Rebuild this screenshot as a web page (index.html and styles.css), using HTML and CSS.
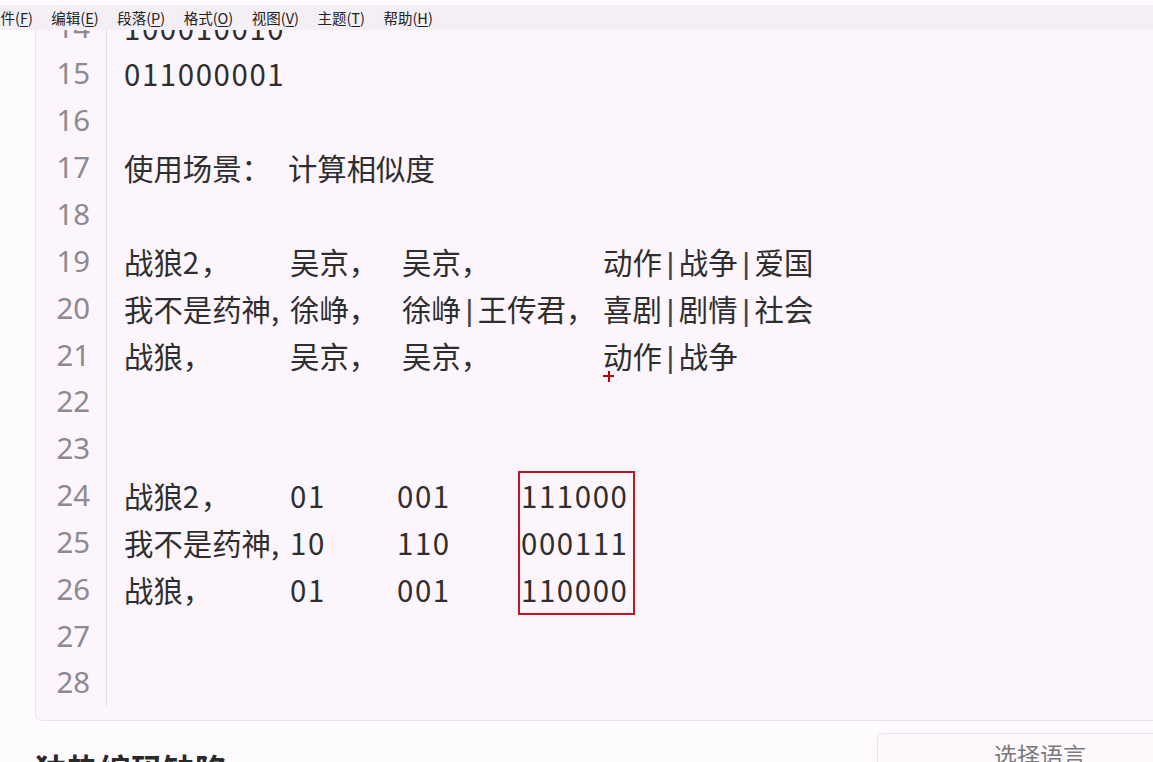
FILE: index.html
```html
<!DOCTYPE html>
<html lang="zh">
<head>
<meta charset="utf-8">
<title>编辑器</title>
<link rel="stylesheet" href="styles.css">
</head>
<body>
<div class="topstrip"></div>
<nav class="menubar">
  <span class="menu">文件(<u>F</u>)</span>
  <span class="menu">编辑(<u>E</u>)</span>
  <span class="menu">段落(<u>P</u>)</span>
  <span class="menu">格式(<u>O</u>)</span>
  <span class="menu">视图(<u>V</u>)</span>
  <span class="menu">主题(<u>T</u>)</span>
  <span class="menu">帮助(<u>H</u>)</span>
</nav>
<main class="editor">
  <div class="lines">
    <div class="row"><span class="num">14</span><span class="txt"><span class="n">100010010</span></span></div>
    <div class="row"><span class="num">15</span><span class="txt"><span class="n">011000001</span></span></div>
    <div class="row"><span class="num">16</span><span class="txt"></span></div>
    <div class="row"><span class="num">17</span><span class="txt">使用场景：<span class="sp"></span>计算相似度</span></div>
    <div class="row"><span class="num">18</span><span class="txt"></span></div>
    <div class="row"><span class="num">19</span><span class="txt"><span class="c1">战狼<span class="n">2</span>，</span><span class="c2">吴京，</span><span class="c3">吴京，</span><span class="c4">动作<span class="bar">|</span>战争<span class="bar">|</span>爱国</span></span></div>
    <div class="row"><span class="num">20</span><span class="txt"><span class="c1">我不是药神,</span><span class="c2">徐峥，</span><span class="c3">徐峥<span class="bar">|</span>王传君，</span><span class="c4">喜剧<span class="bar">|</span>剧情<span class="bar">|</span>社会</span></span></div>
    <div class="row"><span class="num">21</span><span class="txt"><span class="c1">战狼，</span><span class="c2">吴京，</span><span class="c3">吴京，</span><span class="c4 anchor">动作<span class="bar">|</span>战争<span class="cursor"></span></span></span></div>
    <div class="row"><span class="num">22</span><span class="txt"></span></div>
    <div class="row"><span class="num">23</span><span class="txt"></span></div>
    <div class="row"><span class="num">24</span><span class="txt"><span class="c1">战狼<span class="n">2</span>，</span><span class="d2 n">01</span><span class="d3 n">001</span><span class="d4 n anchor">111000<span class="redbox"></span></span></span></div>
    <div class="row"><span class="num">25</span><span class="txt"><span class="c1">我不是药神,</span><span class="d2 n">10</span><span class="d3 n">110</span><span class="d4 n">000111</span></span></div>
    <div class="row"><span class="num">26</span><span class="txt"><span class="c1">战狼，</span><span class="d2 n">01</span><span class="d3 n">001</span><span class="d4 n">110000</span></span></div>
    <div class="row"><span class="num">27</span><span class="txt"></span></div>
    <div class="row"><span class="num">28</span><span class="txt"></span></div>
  </div>
</main>
<footer class="bottom">
  <h2 class="heading">独热编码缺陷</h2>
  <button class="lang">选择语言</button>
</footer>
</body>
</html>
```
FILE: styles.css
```css
html, body {
  margin: 0;
  padding: 0;
}
body {
  background: #fefbfe;
  font-family: "Noto Sans CJK SC", "Noto Sans", sans-serif;
  color: #2e2e2e;
  overflow: hidden;
  width: 1153px;
  height: 762px;
}
.topstrip {
  height: 5px;
}
.menubar {
  height: 25px;
  background: #f4eff4;
  display: flex;
  align-items: center;
  gap: 18.5px;
  margin-left: -14px;
  font-size: 14.5px;
  color: #222;
  white-space: nowrap;
}
.menu u {
  text-decoration: underline;
  text-underline-offset: 2px;
}
.editor {
  margin-left: 35px;
  height: 690px;
  border-left: 1px solid #ebe3eb;
  border-bottom: 1px solid #ebe3eb;
  border-bottom-left-radius: 7px;
  background: #fcf5fc;
  overflow: hidden;
}
.lines {
  margin-top: -26.4px;
}
.row {
  display: flex;
  height: 46.85px;
  line-height: 46.85px;
  font-size: 29.4px;
  white-space: nowrap;
}
.num {
  flex: none;
  width: 54px;
  padding-right: 16px;
  text-align: right;
  color: #8c8a8e;
  border-right: 1px solid #e3dce3;
  font-family: "Noto Sans", "Noto Sans CJK SC", sans-serif;
}
.txt {
  padding-left: 17px;
  display: flex;
  font-family: "Noto Sans CJK SC", sans-serif;
}
.n {
  letter-spacing: 1.6px;
}
.sp {
  display: inline-block;
  width: 17px;
}
.c1 { width: 166px; flex: none; }
.c2 { width: 112px; flex: none; }
.c3 { width: 201px; flex: none; }
.c4 { flex: none; }
.d2 { width: 107px; flex: none; }
.d3 { width: 124px; flex: none; }
.d4 { flex: none; }
.bar {
  display: inline-block;
  width: 17px;
  text-align: center;
  font-family: "Liberation Sans", sans-serif;
  font-size: 30px;
  color: #444;
}
.anchor {
  position: relative;
}
.redbox {
  position: absolute;
  left: -3px;
  top: -1px;
  width: 113px;
  height: 140px;
  border: 2px solid #c8141e;
}
.cursor {
  position: absolute;
  left: 0;
  top: 39px;
  width: 11px;
  height: 11px;
  background:
    linear-gradient(#c00000, #c00000) center / 11px 2px no-repeat,
    linear-gradient(#c00000, #c00000) center / 2px 11px no-repeat;
}
.bottom {
  display: grid;
  grid-template-columns: 842px 326px;
  padding-left: 35px;
  margin-top: 12px;
  align-items: start;
}
.heading {
  margin: 16px 0 0 0;
  font-size: 32px;
  font-weight: 700;
  color: #2a2a2a;
  line-height: 1.2;
}
.lang {
  height: 60px;
  background: #fcf8fc;
  border: 1px solid #ebe5eb;
  border-radius: 5px;
  font-family: "Noto Sans CJK SC", sans-serif;
  font-size: 23px;
  color: #7a7a7a;
  padding-top: 3px;
  align-self: start;
  display: flex;
  justify-content: center;
  align-items: flex-start;
}
```
